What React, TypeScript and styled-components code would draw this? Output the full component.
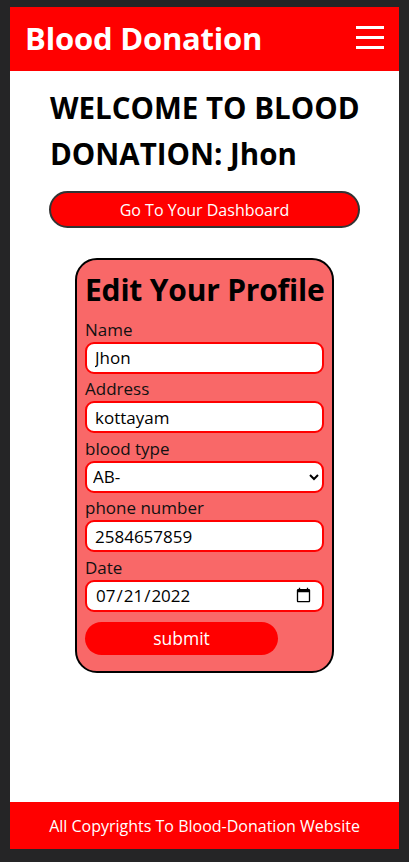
import styled, { createGlobalStyle } from 'styled-components';
import { useState } from 'react';

const GlobalStyle = createGlobalStyle`
  * {
    box-sizing: border-box;
  }
  body {
    margin: 0;
    background: #252526;
    font-family: 'Open Sans', 'Liberation Sans', sans-serif;
  }
`;

const bloodTypes = ['A+', 'A-', 'B+', 'B-', 'AB+', 'AB-', 'O+', 'O-'];

const App = () => {
  const [name, setName] = useState('Jhon');
  const [address, setAddress] = useState('kottayam');
  const [bloodType, setBloodType] = useState('AB-');
  const [phone, setPhone] = useState('2584657859');
  const [date, setDate] = useState('2022-07-21');

  return (
    <>
      <GlobalStyle />
      <Frame>
        <Header>
          <Brand>Blood Donation</Brand>
          <MenuButton aria-label="menu">
            <MenuLine />
            <MenuLine />
            <MenuLine />
          </MenuButton>
        </Header>
        <Main>
          <Welcome>{`WELCOME TO BLOOD DONATION: ${name}`}</Welcome>
          <DashboardButton>Go To Your Dashboard</DashboardButton>
          <Card onSubmit={(e) => e.preventDefault()}>
            <CardTitle>Edit Your Profile</CardTitle>
            <Label>Name</Label>
            <Field value={name} onChange={(e) => setName(e.target.value)} />
            <Label>Address</Label>
            <Field
              value={address}
              onChange={(e) => setAddress(e.target.value)}
            />
            <Label>blood type</Label>
            <Select
              value={bloodType}
              onChange={(e) => setBloodType(e.target.value)}
            >
              {bloodTypes.map((t) => (
                <option key={t} value={t}>
                  {t}
                </option>
              ))}
            </Select>
            <Label>phone number</Label>
            <Field value={phone} onChange={(e) => setPhone(e.target.value)} />
            <Label>Date</Label>
            <Field
              type="date"
              value={date}
              onChange={(e) => setDate(e.target.value)}
            />
            <SubmitButton type="submit">submit</SubmitButton>
          </Card>
        </Main>
        <Footer>All Copyrights To Blood-Donation Website</Footer>
      </Frame>
    </>
  );
};

const Frame = styled.div`
  margin: 7px 10px 13px 10px;
  min-height: 842px;
  background: #ffffff;
  display: flex;
  flex-direction: column;
`;

const Header = styled.header`
  height: 64px;
  background: #ff0000;
  display: flex;
  align-items: center;
  justify-content: space-between;
  padding: 0 15px 0 15px;
`;

const Brand = styled.div`
  color: #ffffff;
  font-size: 31px;
  font-weight: 700;
  letter-spacing: -0.2px;
  margin-top: -2px;
`;

const MenuButton = styled.div`
  width: 28px;
  display: flex;
  flex-direction: column;
  gap: 7px;
  margin-top: -3px;
`;

const MenuLine = styled.span`
  display: block;
  height: 3px;
  background: #ffffff;
`;

const Main = styled.main`
  flex: 1;
  padding: 14px 39px 40px;
  display: flex;
  flex-direction: column;
`;

const Welcome = styled.h1`
  margin: 0 0 0 1px;
  font-size: 29.5px;
  line-height: 46px;
  font-weight: 700;
  color: #000000;
`;

const DashboardButton = styled.button`
  margin-top: 14px;
  height: 37px;
  width: 100%;
  background: #ff0000;
  color: #ffffff;
  border: 2px solid #333333;
  border-radius: 19px;
  font-family: inherit;
  font-size: 16px;
`;

const Card = styled.form`
  margin: 30px auto 0;
  width: 259px;
  background: #f96868;
  border: 2px solid #000000;
  border-radius: 22px;
  padding: 9px 8px 16px;
  display: flex;
  flex-direction: column;
`;

const CardTitle = styled.h2`
  margin: 0 0 3px;
  font-size: 30px;
  line-height: 42px;
  font-weight: 700;
  color: #000000;
  white-space: nowrap;
  letter-spacing: -0.2px;
`;

const Label = styled.label`
  font-size: 17px;
  line-height: 24px;
  color: #111111;
  margin-top: 3.5px;
`;

const Field = styled.input`
  height: 32px;
  width: 100%;
  border: 2px solid #ff0000;
  border-radius: 9px;
  background: #ffffff;
  padding: 0 8px;
  font-family: inherit;
  font-size: 17px;
  color: #000000;
  outline: none;
`;

const Select = styled.select`
  height: 32px;
  width: 100%;
  border: 2px solid #ff0000;
  border-radius: 9px;
  background: #ffffff;
  padding: 0 2px;
  font-family: inherit;
  font-size: 17px;
  color: #000000;
  outline: none;
`;

const SubmitButton = styled.button`
  margin-top: 10px;
  width: 193px;
  height: 33px;
  background: #ff0000;
  color: #ffffff;
  border: none;
  border-radius: 17px;
  font-family: inherit;
  font-size: 17.5px;
`;

const Footer = styled.footer`
  height: 47px;
  background: #ff0000;
  color: #ffffff;
  display: flex;
  align-items: center;
  justify-content: center;
  font-size: 16px;
`;

export default App;
